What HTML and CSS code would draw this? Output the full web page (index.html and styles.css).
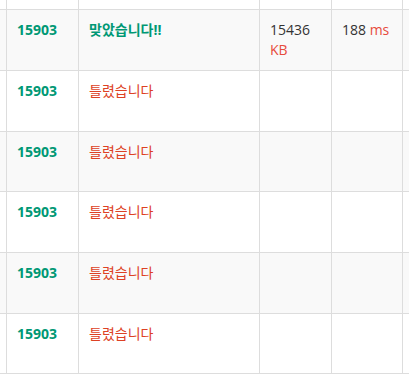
FILE: index.html
```html
<!DOCTYPE html>
<html lang="ko">
<head>
<meta charset="utf-8">
<link rel="stylesheet" href="styles.css">
</head>
<body>
<div class="viewport">
  <table class="status-table">
    <colgroup>
      <col class="c-lead"><col class="c-id"><col class="c-result"><col class="c-mem"><col class="c-time"><col class="c-tail">
    </colgroup>
    <tbody>
      <tr>
        <td></td><td></td><td></td><td></td><td></td><td></td>
      </tr>
      <tr class="odd">
        <td></td><td class="pid">15903</td><td><span class="ac">맞았습니다!!</span></td>
        <td>15436 <span class="unit">KB</span></td>
        <td>188 <span class="unit">ms</span></td><td></td>
      </tr>
      <tr>
        <td></td><td class="pid">15903</td><td><span class="wa">틀렸습니다</span></td><td></td><td></td><td></td>
      </tr>
      <tr class="odd">
        <td></td><td class="pid">15903</td><td><span class="wa">틀렸습니다</span></td><td></td><td></td><td></td>
      </tr>
      <tr>
        <td></td><td class="pid">15903</td><td><span class="wa">틀렸습니다</span></td><td></td><td></td><td></td>
      </tr>
      <tr class="odd">
        <td></td><td class="pid">15903</td><td><span class="wa">틀렸습니다</span></td><td></td><td></td><td></td>
      </tr>
      <tr>
        <td></td><td class="pid">15903</td><td><span class="wa">틀렸습니다</span></td><td></td><td></td><td></td>
      </tr>
    </tbody>
  </table>
</div>
</body>
</html>
```
FILE: styles.css
```css
html, body {
  margin: 0;
  padding: 0;
  background: #fff;
}
body {
  font-family: "Open Sans", "Noto Sans CJK KR", sans-serif;
  font-size: 14px;
  line-height: 20px;
  color: #333;
}
.viewport {
  width: 409px;
  height: 374px;
  overflow: hidden;
}
.status-table {
  border-collapse: collapse;
  table-layout: fixed;
  width: 576px;
  margin: -51.67px 0 0 -54px;
}
.c-lead { width: 60px; }
.c-id { width: 72px; }
.c-result { width: 181px; }
.c-mem { width: 72px; }
.c-time { width: 71px; }
.c-tail { width: 120px; }
.status-table td {
  border: 1px solid #ddd;
  padding: 10px 10px;
  vertical-align: top;
  height: 39.67px;
}
.status-table tr.odd td {
  background: #f9f9f9;
}
.pid {
  font-weight: 700;
  color: #009874;
}
.ac {
  font-weight: 700;
  color: #009874;
}
.wa {
  color: #dd4124;
}
.unit {
  color: #e74c3c;
}
```
